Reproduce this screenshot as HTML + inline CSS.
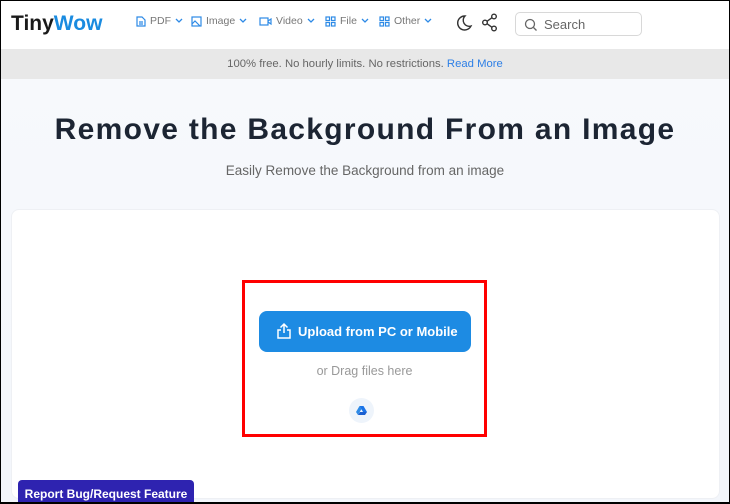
<!DOCTYPE html>
<html><head><meta charset="utf-8"><style>
*{margin:0;padding:0;box-sizing:border-box}
html,body{width:730px;height:504px;overflow:hidden}
body{font-family:"Liberation Sans",sans-serif;background:#fff;position:relative}
.frame{position:absolute;left:0;top:0;width:730px;height:504px;border:1px solid #000;border-bottom:2px solid #000;pointer-events:none;z-index:10}
.hdr{position:absolute;left:0;top:0;width:730px;height:49px;background:#fff}
.logo{position:absolute;left:11px;top:12px;font-size:21px;font-weight:bold;color:#1a1a1a}
.logo span{color:#1a8be0}
.nav{position:absolute;top:15px;font-size:10.5px;color:#777;display:flex;align-items:center;gap:4px}
.nav svg{stroke:#2d8ae6}
.search{position:absolute;left:515px;top:12px;width:127px;height:24px;border:1px solid #d8d8d8;border-radius:5px;font-size:13px;color:#666}
.banner{position:absolute;left:0;top:49px;width:730px;height:30px;background:#e8e8e8;text-align:center;line-height:30px;font-size:11.3px;color:#666}
.banner a{color:#2d7fe6;text-decoration:none}
.hero{position:absolute;left:0;top:79px;width:730px;height:425px;background:linear-gradient(#f7f9fc,#f3f6fb)}
h1{position:absolute;top:113px;width:730px;text-align:center;font-size:30px;letter-spacing:1.3px;color:#1c2533;font-weight:bold}
.sub{position:absolute;top:163px;width:730px;text-align:center;font-size:13.5px;color:#666}
.card{position:absolute;left:11px;top:209px;width:709px;height:290px;background:#fff;border-radius:8px;border:1px solid #eef0f4}
.red{position:absolute;left:242px;top:280px;width:245px;height:157px;border:3px solid #f00}
.btn{position:absolute;left:259px;top:311px;width:212px;height:41px;background:#1d8be3;border-radius:8px;color:#fff;font-weight:bold;font-size:13px;line-height:41px;padding-left:39px}
.drag{position:absolute;top:364px;left:242px;width:245px;text-align:center;font-size:12.5px;color:#999}
.gd{position:absolute;left:349px;top:398px;width:25px;height:25px;border-radius:50%;background:#eef4fb}
.report{position:absolute;left:18px;top:480px;width:176px;height:24px;background:#2e23b0;border-radius:4px 4px 0 0;color:#fff;font-weight:bold;font-size:12px;text-align:center;line-height:28px;overflow:hidden}
</style></head><body>
<div class="hero"></div>
<div class="hdr">
<div class="logo">Tiny<span>Wow</span></div>
<div class="nav" style="left:136px"><svg width="10" height="11" fill="none" stroke-width="1.2"><path d="M1 1h5l3 3v6H1z M3 6h4M3 8h4"/></svg>PDF<svg width="8" height="6" fill="none" stroke-width="1.3"><path d="M1 1l3 3 3-3"/></svg></div>
<div class="nav" style="left:191px"><svg width="11" height="11" fill="none" stroke-width="1.2"><rect x="1" y="1" width="9" height="9"/><path d="M1 8l3-3 5 5"/></svg>Image<svg width="8" height="6" fill="none" stroke-width="1.3"><path d="M1 1l3 3 3-3"/></svg></div>
<div class="nav" style="left:259px"><svg width="13" height="11" fill="none" stroke-width="1.2"><rect x="1" y="2" width="8" height="7"/><path d="M9 5l3-2v5l-3-2"/></svg>Video<svg width="8" height="6" fill="none" stroke-width="1.3"><path d="M1 1l3 3 3-3"/></svg></div>
<div class="nav" style="left:325px"><svg width="11" height="11" fill="none" stroke-width="1.2"><rect x="1" y="1" width="3.5" height="3.5"/><rect x="6.5" y="1" width="3.5" height="3.5"/><rect x="1" y="6.5" width="3.5" height="3.5"/><rect x="6.5" y="6.5" width="3.5" height="3.5"/></svg>File<svg width="8" height="6" fill="none" stroke-width="1.3"><path d="M1 1l3 3 3-3"/></svg></div>
<div class="nav" style="left:379px"><svg width="11" height="11" fill="none" stroke-width="1.2"><rect x="1" y="1" width="3.5" height="3.5"/><rect x="6.5" y="1" width="3.5" height="3.5"/><rect x="1" y="6.5" width="3.5" height="3.5"/><rect x="6.5" y="6.5" width="3.5" height="3.5"/></svg>Other<svg width="8" height="6" fill="none" stroke-width="1.3"><path d="M1 1l3 3 3-3"/></svg></div>
<svg style="position:absolute;left:455px;top:14px" width="18" height="18" fill="none" stroke="#333" stroke-width="1.4"><path d="M10 2a7 7 0 1 0 6 10A6 6 0 0 1 10 2z"/></svg>
<svg style="position:absolute;left:481px;top:13px" width="18" height="19" fill="none" stroke="#333" stroke-width="1.4"><circle cx="13" cy="3.5" r="2.3"/><circle cx="4" cy="9.5" r="2.3"/><circle cx="13" cy="15.5" r="2.3"/><path d="M6 8.3l5-3.6M6 10.7l5 3.6"/></svg>
<div class="search"><svg style="position:absolute;left:8px;top:5px" width="13" height="13" fill="none" stroke="#666" stroke-width="1.3"><circle cx="6" cy="6" r="4.5"/><path d="M9.5 9.5l3 3"/></svg><span style="position:absolute;left:28px;top:4px">Search</span></div>
</div>
<div class="banner">100% free. No hourly limits. No restrictions. <a>Read More</a></div>
<h1>Remove the Background From an Image</h1>
<div class="sub">Easily Remove the Background from an image</div>
<div class="card"></div>
<div class="red"></div>
<div class="btn"><svg style="position:absolute;left:16px;top:11px" width="18" height="18" fill="none" stroke="#fff" stroke-width="1.5"><path d="M9 11V2M5.5 5.5L9 2l3.5 3.5M6 8H3v8h12V8h-3"/></svg>Upload from PC or Mobile</div>
<div class="drag">or Drag files here</div>
<div class="gd"><svg style="position:absolute;left:7px;top:8px" width="11" height="9"><path d="M3.5 0h4l3.5 6h-4z" fill="#1a73e8"/><path d="M3.5 0L0 6l2 3 3.5-6z" fill="#2d8ae6"/><path d="M2 9h7l2-3H4z" fill="#1a5fd0"/></svg></div>
<div class="report">Report Bug/Request Feature</div>
<div class="frame"></div>
</body></html>
